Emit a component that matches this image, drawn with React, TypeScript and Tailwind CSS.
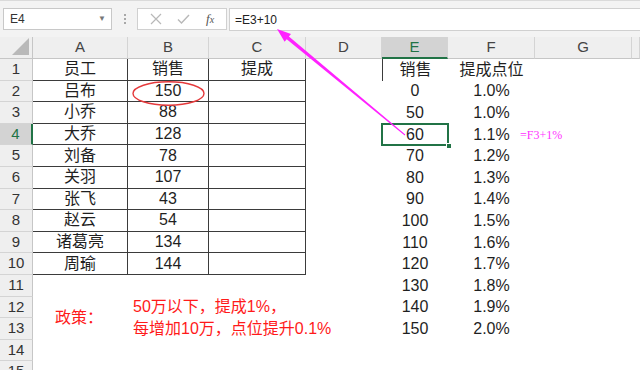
import React from "react"

const letters = ["A", "B", "C", "D", "E", "F", "G", ""]

const staff: [string, string][] = [
  ["员工", "销售"],
  ["吕布", "150"],
  ["小乔", "88"],
  ["大乔", "128"],
  ["刘备", "78"],
  ["关羽", "107"],
  ["张飞", "43"],
  ["赵云", "54"],
  ["诸葛亮", "134"],
  ["周瑜", "144"],
]

const rates: [string, string][] = [
  ["销售", "提成点位"],
  ["0", "1.0%"],
  ["50", "1.0%"],
  ["60", "1.1%"],
  ["70", "1.2%"],
  ["80", "1.3%"],
  ["90", "1.4%"],
  ["100", "1.5%"],
  ["110", "1.6%"],
  ["120", "1.7%"],
  ["130", "1.8%"],
  ["140", "1.9%"],
  ["150", "2.0%"],
]

const font = "font-['Liberation_Sans','Noto_Sans_CJK_SC',sans-serif]"
const cell = "h-[21.6px] flex items-center justify-center text-[16px] text-[#1f1f1f] whitespace-nowrap"
const tableCell = "border-r border-b border-[#3b3b3b]"

function Toolbar() {
  return (
    <div className="flex h-[37px] items-start gap-0 border-t border-[#dadada] bg-[#f3f3f3] pt-[7px]">
      <div className="ml-[3px] flex h-[22px] w-[109px] items-center justify-between border border-[#c8c8c8] bg-white pl-[6px] pr-[5px]">
        <span className="text-[12px] text-[#333]">E4</span>
        <span className="text-[8px] text-[#777]">▼</span>
      </div>
      <div className="flex h-[22px] w-[25px] flex-col items-center justify-center gap-[2px]">
        <span className="h-[2px] w-[2px] bg-[#a8a8a8]" />
        <span className="h-[2px] w-[2px] bg-[#a8a8a8]" />
        <span className="h-[2px] w-[2px] bg-[#a8a8a8]" />
      </div>
      <div className="flex h-[22px] w-[90px] items-center justify-around border border-[#d0d0d0] bg-white px-[4px]">
        <svg width="12" height="12" viewBox="0 0 12 12" stroke="#b8b8b8" strokeWidth="1.2" fill="none">
          <path d="M1 1 L11 11 M11 1 L1 11" />
        </svg>
        <svg width="13" height="12" viewBox="0 0 13 12" stroke="#b8b8b8" strokeWidth="1.4" fill="none">
          <path d="M1 6.5 L4.5 10 L12 2" />
        </svg>
        <span className="font-['Liberation_Serif',serif] text-[13px] italic text-[#555]">
          f<span className="text-[10px]">x</span>
        </span>
      </div>
      <div className="ml-[2px] flex h-[23px] flex-1 items-center border-y border-l border-[#d0d0d0] bg-white pl-[5px]">
        <span className="text-[12px] text-[#222]">=E3+10</span>
      </div>
    </div>
  )
}

export default function App() {
  const rows = Array.from({ length: 15 }, (_, i) => i + 1)

  return (
    <div className={`relative h-[370px] w-[640px] overflow-hidden bg-white ${font}`}>
      <Toolbar />

      <div className="grid grid-cols-[33px_95px_81px_97px_76px_66px_87px_97px_1fr]">
        {/* column headers */}
        <div className="relative h-[22px] border-r border-b border-[#c6c6c6] bg-[#efefef]">
          <div className="absolute bottom-[3px] right-[3px] h-0 w-0 border-b-[17px] border-l-[17px] border-b-[#b9b9b9] border-l-transparent" />
        </div>
        {letters.map((l) => (
          <div
            key={l || "h"}
            className={
              l === "E"
                ? "flex h-[22px] items-center justify-center border-r border-b-2 border-r-[#d4d4d4] border-b-[#217346] bg-[#d3d3d3] text-[15px] text-[#217346]"
                : "flex h-[22px] items-center justify-center border-r border-b border-r-[#d4d4d4] border-b-[#c6c6c6] bg-[#efefef] text-[15px] text-[#444]"
            }
          >
            {l}
          </div>
        ))}

        {rows.map((r) => {
          const s = staff[r - 1]
          const rate = rates[r - 1]
          const inTable = r <= 10
          const top = r === 1 ? "border-t-0" : ""
          return (
            <React.Fragment key={r}>
              <div
                className={
                  r === 4
                    ? "flex h-[21.6px] items-center justify-center border-r-2 border-b border-r-[#217346] border-b-[#d4d4d4] bg-[#d3d3d3] text-[15px] text-[#217346]"
                    : "flex h-[21.6px] items-center justify-center border-r border-b border-r-[#c6c6c6] border-b-[#d4d4d4] bg-[#efefef] text-[15px] text-[#333]"
                }
              >
                {r}
              </div>

              {/* A */}
              {r === 12 ? (
                <div className="row-span-2 flex items-center pl-[22px] text-[16px] text-[#ff1a1a]">政策：</div>
              ) : r === 13 ? null : (
                <div className={`${cell} ${inTable ? tableCell : ""} ${top}`}>{s?.[0]}</div>
              )}

              {/* B */}
              {r === 12 || r === 13 ? (
                <div className="relative h-[21.6px]">
                  <span className="absolute left-[5px] top-1/2 -translate-y-1/2 whitespace-nowrap text-[16px] text-[#ff1a1a]">
                    {r === 12 ? "50万以下，提成1%，" : "每增加10万，点位提升0.1%"}
                  </span>
                </div>
              ) : (
                <div className={`${cell} ${inTable ? tableCell : ""}`}>{s?.[1]}</div>
              )}

              {/* C */}
              <div className={`${cell} ${inTable ? tableCell : ""}`}>{r === 1 ? "提成" : ""}</div>

              {/* D */}
              <div className={cell} />

              {/* E */}
              <div className={`${cell} relative ${r === 1 ? "border-l border-[#3b3b3b]" : ""}`}>
                {rate?.[0]}
                {r === 4 && (
                  <>
                    <div className="absolute -inset-x-px -top-px -bottom-px border-2 border-[#217346]" />
                    <div className="absolute -bottom-[4px] -right-[4px] h-[6px] w-[6px] border border-white bg-[#217346]" />
                  </>
                )}
              </div>

              {/* F */}
              <div className={`${cell} relative`}>
                {rate?.[1]}
                {r === 4 && (
                  <span className="absolute left-[72px] top-1/2 -translate-y-1/2 font-['Liberation_Serif',serif] text-[12px] text-[#ff33ff]">
                    =F3+1%
                  </span>
                )}
              </div>

              {/* G, H */}
              <div className={cell} />
              <div className={cell} />
            </React.Fragment>
          )
        })}
      </div>

      <svg className="pointer-events-none absolute inset-0 z-10" width="640" height="370" viewBox="0 0 640 370">
        <ellipse cx="168.5" cy="93.5" rx="35.5" ry="11.7" fill="none" stroke="#e5393b" strokeWidth="1.4" />
        <polygon points="277,29 284.6,41.8 286.7,39.2 404.7,135.4 405.3,134.6 288.9,36.5 291,34" fill="#ff22ff" />
      </svg>
    </div>
  )
}
